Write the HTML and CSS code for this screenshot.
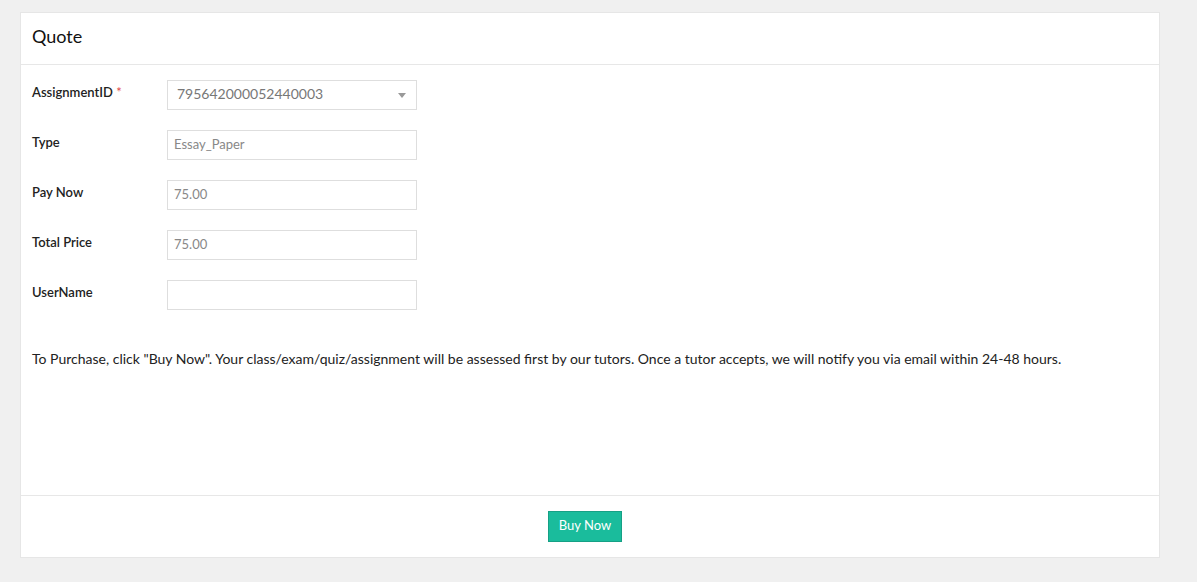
FILE: index.html
```html
<!DOCTYPE html>
<html>
<head>
<meta charset="utf-8">
<link rel="stylesheet" href="styles.css">
</head>
<body>
<div class="page">
  <div class="card">
    <div class="card-header">Quote</div>
    <div class="card-body">
      <div class="row">
        <label class="label">AssignmentID <span class="req">*</span></label>
        <div class="field select">
          <span class="value">795642000052440003</span>
          <span class="caret"></span>
        </div>
      </div>
      <div class="row">
        <label class="label">Type</label>
        <div class="field small"><span class="value">Essay_Paper</span></div>
      </div>
      <div class="row">
        <label class="label">Pay Now</label>
        <div class="field small"><span class="value">75.00</span></div>
      </div>
      <div class="row">
        <label class="label">Total Price</label>
        <div class="field small"><span class="value">75.00</span></div>
      </div>
      <div class="row">
        <label class="label">UserName</label>
        <div class="field small"><span class="value"></span></div>
      </div>
      <p class="note">To Purchase, click "Buy Now". Your class/exam/quiz/assignment will be assessed first by our tutors. Once a tutor accepts, we will notify you via email within 24-48 hours.</p>
    </div>
    <div class="card-footer">
      <button class="btn">Buy Now</button>
    </div>
  </div>
</div>
</body>
</html>
```
FILE: styles.css
```css
html, body {
  margin: 0;
  padding: 0;
  background: #f0f0f0;
  font-family: Lato, "Open Sans", sans-serif;
  color: #222;
}
.page {
  padding: 12px 37px 24px 20px;
}
.card {
  background: #fff;
  border: 1px solid #e6e6e6;
  width: 1138px;
}
.card-header {
  height: 51px;
  border-bottom: 1px solid #e7e7e7;
  padding-left: 11px;
  font-size: 18px;
  line-height: 46px;
  color: #111;
}
.card-body {
  height: 430px;
  padding: 15px 11px 0 11px;
  box-sizing: border-box;
}
.row {
  display: flex;
  align-items: flex-start;
  height: 50px;
}
.label {
  width: 135px;
  font-size: 13px;
  font-weight: 600;
  color: #222;
  padding-top: 4px;
}
.req {
  color: #e04b4b;
  font-weight: 400;
}
.field {
  width: 250px;
  height: 30px;
  box-sizing: border-box;
  border: 1px solid #dedede;
  display: flex;
  align-items: center;
  justify-content: space-between;
  padding: 0 10px 3px 6px;
  color: #888;
}
.select {
  padding-left: 9px;
  padding-bottom: 3px;
  font-size: 14px;
  color: #777;
}
.small {
  font-size: 13px;
}
.caret {
  width: 0;
  height: 0;
  border-left: 4px solid transparent;
  border-right: 4px solid transparent;
  border-top: 5px solid #999;
  margin-top: 4px;
}
.note {
  margin: 20px 0 0 0;
  font-size: 14px;
  color: #222;
}
.card-footer {
  border-top: 1px solid #e7e7e7;
  height: 61px;
  display: flex;
  justify-content: center;
  align-items: center;
  padding-right: 10px;
}
.btn {
  background: #1abc9c;
  border: 1px solid #16a085;
  color: #fff;
  font-family: Lato, "Open Sans", sans-serif;
  font-size: 13px;
  width: 74px;
  height: 31px;
  padding: 0 0 3px 0;
}
```
